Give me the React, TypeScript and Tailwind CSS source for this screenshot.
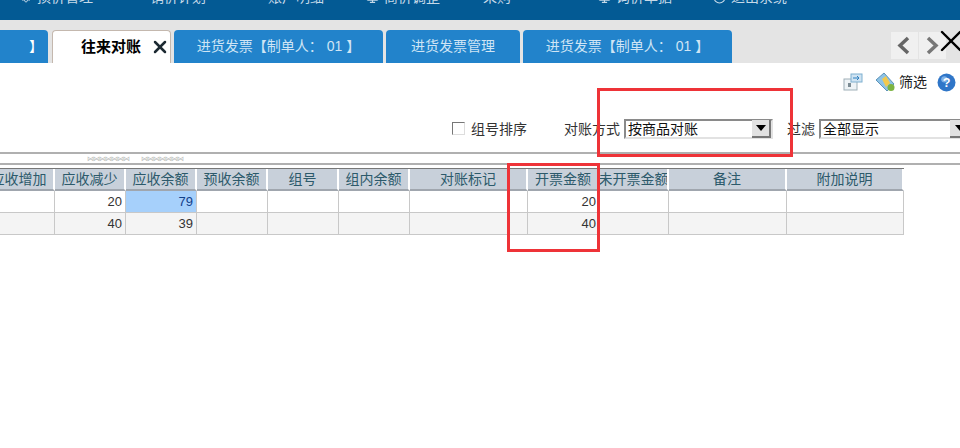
import React from 'react';
import { X, Settings, Minus, Download, Monitor, Circle } from 'lucide-react';

const font = "font-['Liberation_Sans','Noto_Sans_CJK_SC',sans-serif]";

const columns = [
    { title: '应收增加', width: 'w-[71px]' },
    { title: '应收减少', width: 'w-[71px]' },
    { title: '应收余额', width: 'w-[71px]' },
    { title: '预收余额', width: 'w-[71px]' },
    { title: '组号', width: 'w-[71px]' },
    { title: '组内余额', width: 'w-[71px]' },
    { title: '对账标记', width: 'w-[118px]' },
    { title: '开票金额', width: 'w-[72px]' },
    { title: '未开票金额', width: 'w-[69px]' },
    { title: '备注', width: 'w-[118px]' },
    { title: '附加说明', width: 'w-[117px]' },
];

const rows = [
    ['', '20', '79', '', '', '', '', '20', '', '', ''],
    ['', '40', '39', '', '', '', '', '40', '', '', ''],
];

const Tab = ({ label, width }: { label: string; width: string }) => (
    <div className={`${width} h-[33px] bg-[#2283cb] rounded-t-[4px] flex items-center justify-center text-[14px] text-[#cfe5f5] whitespace-nowrap overflow-hidden`}>
        {label}
    </div>
);

const NavItem = ({ label, width, icon }: { label: string; width: string; icon: React.ReactNode }) => (
    <div className={`${width} shrink-0 flex items-center gap-[5px] text-[14px] leading-[14px] text-[#c5d9e8] whitespace-nowrap`}>
        {icon}
        {label}
    </div>
);

const Arrow = () => (
    <svg width="10" height="6" viewBox="0 0 10 6">
        <polygon points="0,0 10,0 5,6" fill="#000" />
    </svg>
);

const Chevron = ({ points, color }: { points: string; color: string }) => (
    <svg width="27" height="27" viewBox="0 0 27 27">
        <polyline points={points} fill="none" stroke={color} strokeWidth="3.5" />
    </svg>
);

export default function App() {
    return (
        <div className={`${font} relative w-[960px] h-[448px] overflow-hidden bg-white`}>
            {/* top bar */}
            <div className="h-[20px] bg-[#035a94] overflow-hidden flex pl-[20px]">
                <div className="flex h-[14px] -mt-[10px]">
                    <NavItem label="损价管理" width="w-[112px]" icon={<Settings size={12} />} />
                    <NavItem label="销价计划" width="w-[125px]" icon={<Minus size={13} />} />
                    <NavItem label="账户明细" width="w-[109px]" icon={<Download size={6} />} />
                    <NavItem label="商价调整" width="w-[111px]" icon={<Monitor size={13} />} />
                    <NavItem label="采购" width="w-[121px]" icon={<Minus size={1} />} />
                    <NavItem label="询价单据" width="w-[115px]" icon={<Monitor size={13} />} />
                    <NavItem label="退出系统" width="w-[100px]" icon={<Circle size={13} />} />
                </div>
            </div>

            {/* tab strip */}
            <div className="relative h-[43px] bg-[#e4e4e4] flex items-end gap-[3px]">
                <div className="w-[48px] h-[33px] bg-[#2283cb] rounded-tr-[4px] flex items-center justify-end pr-[5px] text-[14px] text-white">】</div>
                <div className="w-[119px] h-[33px] ml-[1px] bg-white rounded-t-[4px] border-t border-x border-[#c4b8ae] flex items-center justify-end gap-[9px] text-[15px] font-bold text-black">
                    <span>往来对账</span>
                    <X size={20} strokeWidth={3} className="text-[#1d2a33]" />
                </div>
                <Tab label="进货发票【制单人： 01  】" width="w-[209px]" />
                <Tab label="进货发票管理" width="w-[134px]" />
                <Tab label="进货发票【制单人： 01  】" width="w-[209px]" />
                <div className="absolute left-[891px] top-[12px] flex gap-[1px]">
                    <div className="w-[27px] h-[27px] bg-[#f0f0f0]">
                        <Chevron points="17,6 9,13.5 17,21" color="#666" />
                    </div>
                    <div className="w-[27px] h-[27px] bg-[#f0f0f0]">
                        <Chevron points="9,6 17,13.5 9,21" color="#777" />
                    </div>
                </div>
                <X size={36} strokeWidth={1.6} className="absolute left-[933px] top-[3px] text-black" />
            </div>

            {/* icons row */}
            <div className="h-[38px] flex items-center justify-end pr-[4px]">
                <svg width="20" height="18" viewBox="0 0 20 18" className="mr-[12px]">
                    <rect x="1" y="6" width="13" height="11" fill="#eef3f6" stroke="#9fb0b8" />
                    <rect x="8" y="1" width="11" height="8" fill="#cfe3f2" stroke="#7fb0d0" />
                    <path d="M10 5h6M14 3l2 2-2 2" stroke="#2f80c0" fill="none" />
                    <rect x="5" y="10" width="3" height="4" fill="#7d8c94" />
                </svg>
                <svg width="21" height="20" viewBox="0 0 21 20">
                    <path d="M1 8 9 1l10 11-7 7z" fill="#8ec3e6" stroke="#5d93b8" />
                    <path d="M7 7l4-3 4 7-4 4z" fill="#f2c94c" />
                    <circle cx="16" cy="15.5" r="3.5" fill="#7cb342" />
                </svg>
                <span className="text-[14px] text-[#222] ml-[3px] mr-[10px]">筛选</span>
                <svg width="19" height="19" viewBox="0 0 18 18">
                    <circle cx="9" cy="9" r="8.5" fill="#2f76c8" />
                    <circle cx="7" cy="6" r="3" fill="#7fb0e6" />
                    <text x="9" y="13.5" textAnchor="middle" fontSize="12" fontWeight="bold" fill="#fff">?</text>
                </svg>
            </div>

            {/* options row */}
            <div className="h-[51px] flex items-start text-[14px] text-[#333] whitespace-nowrap pt-[18px]">
                <div className="ml-[452px] mt-[3px] w-[13px] h-[13px] shrink-0 border border-[#777] border-r-[#ddd] border-b-[#ddd] bg-white" />
                <span className="ml-[6px] shrink-0">组号排序</span>
                <span className="ml-[37px] shrink-0">对账方式</span>
                <div className="ml-[4px] w-[149px] h-[20px] shrink-0 border-2 border-[#8a8a8a] border-r-[#e2e2e2] border-b-[#e2e2e2] flex items-center justify-between text-[#111]">
                    <span className="pl-[2px]">按商品对账</span>
                    <div className="w-[19px] h-[18px] bg-[#e2e2e2] border-r-2 border-b-2 border-[#777] flex items-center justify-center">
                        <Arrow />
                    </div>
                </div>
                <span className="ml-[14px] shrink-0">过滤</span>
                <div className="ml-[4px] w-[160px] shrink-0 h-[20px] border-2 border-[#8a8a8a] border-r-[#e2e2e2] border-b-[#e2e2e2] flex items-center justify-between text-[#111]">
                    <span className="pl-[2px]">全部显示</span>
                    <div className="w-[19px] h-[18px] mr-[8px] bg-[#e2e2e2] border-b-2 border-[#777] flex items-center justify-center">
                        <Arrow />
                    </div>
                </div>
            </div>

            {/* splitter */}
            <div className="h-[13px] border-t-2 border-b-2 border-[#b0b0b0] flex items-center text-[7px] leading-[8px] text-[#bbb] tracking-[-1px]">
                <span className="ml-[87px]">⋈⋈⋈⋈⋈⋈⋈</span>
                <span className="ml-[12px]">⋈⋈⋈⋈⋈⋈⋈</span>
            </div>

            {/* grid */}
            <div className="mt-[3px] ml-[-16px] w-fit">
                <div className="flex h-[23px] border-t border-[#777] bg-white">
                    {columns.map((c, i) => (
                        <div key={i} className={`${c.width} shrink-0 h-[22px] bg-[#c8d0da] border-r-2 border-b-2 border-r-[#fff] border-b-[#a0a6ae] flex items-center justify-center text-[14px] text-[#2c5a6b] whitespace-nowrap overflow-hidden`}>
                            {c.title}
                        </div>
                    ))}
                </div>
                {rows.map((row, r) => (
                    <div key={r} className={`flex h-[22px] border-b border-[#c8c8c8] ${r === 1 ? 'bg-[#f4f4f4]' : 'bg-white'}`}>
                        {row.map((v, i) => (
                            <div key={i} className={`${columns[i].width} shrink-0 border-r border-[#c8c8c8] flex items-center justify-end pr-[3px] text-[13px] ${r === 0 && i === 2 ? 'bg-[#a6d0fb] text-[#12408a]' : 'text-[#333]'}`}>
                                {v}
                            </div>
                        ))}
                    </div>
                ))}
            </div>

            {/* red annotation boxes */}
            <div className="absolute left-[597px] top-[88px] w-[196px] h-[69px] border-[3px] border-[#ee3338]" />
            <div className="absolute left-[507px] top-[163px] w-[93px] h-[89px] border-[3px] border-[#ee3338]" />
        </div>
    );
}
